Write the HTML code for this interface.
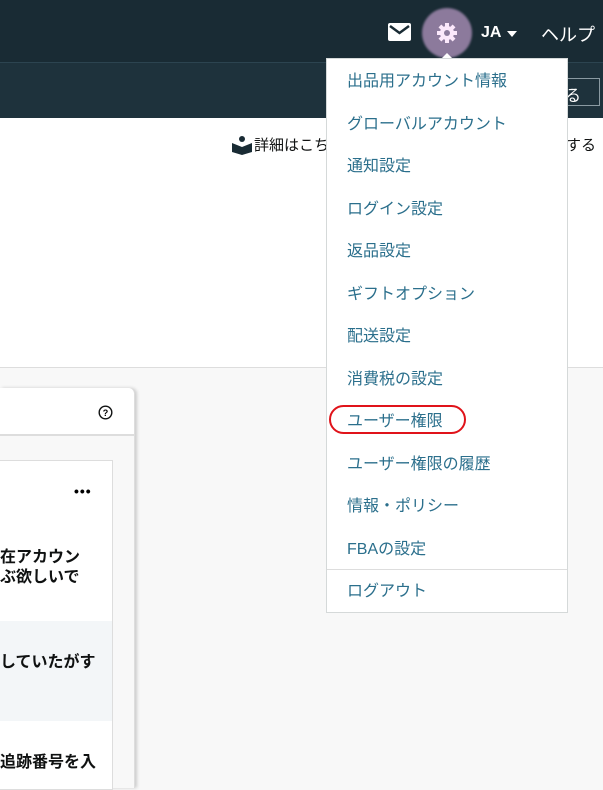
<!DOCTYPE html>
<html><head><meta charset="utf-8"><style>
*{margin:0;padding:0;box-sizing:border-box}
body{width:603px;height:778px;overflow:hidden;position:relative;background:#f8f8f8;font-family:"Liberation Sans","Noto Sans CJK JP",sans-serif}
.top{position:absolute;left:0;top:0;width:603px;height:62px;background:#192b34}
.bar2{position:absolute;left:0;top:62px;width:603px;height:56px;background:#1e323c;border-top:1px solid #2c4450}
.white{position:absolute;left:0;top:118px;width:603px;height:250px;background:#fff;border-bottom:1px solid #ddd}
.btn{position:absolute;left:540px;top:78px;width:60px;height:28px;border:1px solid #8a9aa2;color:#fff;font-size:16px;padding:3px 0 0 24px}
.menu{position:absolute;left:326px;top:58px;width:242px;height:555px;background:#fff;border:1px solid #d5d9d9}
.menu div{position:absolute;left:20px;font-size:16px;color:#2b6f8c;white-space:nowrap}
.card{position:absolute;left:0;top:388px;width:135px;height:400px;background:#f8f8f8;border-right:1px solid #ddd;box-shadow:2px 0 3px #ccc;border-top-right-radius:6px}
.ch{position:absolute;left:0;top:0;width:134px;height:48px;background:#fff;border-bottom:2px solid #ddd;border-top-right-radius:6px}
.inner{position:absolute;left:0;top:72px;width:113px;height:330px;background:#fff;border:1px solid #ddd;border-left:none}
.t{position:absolute;font-size:16px;font-weight:bold;color:#0f1111;white-space:nowrap}
</style></head><body>
<div class="top"></div>
<div class="bar2"></div>
<div class="btn">る</div>
<svg style="position:absolute;left:388px;top:23px" width="23" height="18" viewBox="0 0 23 18"><rect width="23" height="18" rx="2" fill="#fff"/><path d="M2 3 L11.5 10 L21 3" stroke="#192b34" stroke-width="2.5" fill="none"/></svg>
<div style="position:absolute;left:422px;top:8px;width:50px;height:50px;border-radius:50%;background:#8c7a9c;filter:blur(1px)"></div>
<svg style="position:absolute;left:437px;top:23px" width="20" height="20" viewBox="0 0 20 20"><g fill="#fbe8fb"><circle cx="10" cy="10" r="7"/><g id="tth"><rect x="8" y="0" width="4" height="5"/><rect x="8" y="15" width="4" height="5"/></g><use href="#tth" transform="rotate(45 10 10)"/><use href="#tth" transform="rotate(90 10 10)"/><use href="#tth" transform="rotate(135 10 10)"/></g><circle cx="10" cy="10" r="3" fill="#8c7a9c"/></svg>
<div style="position:absolute;left:481px;top:24px;color:#fff;font-weight:bold;font-size:16px">JA</div>
<div style="position:absolute;left:507px;top:31px;border:5px solid transparent;border-top:6px solid #fff"></div>
<div style="position:absolute;left:541px;top:21px;color:#fff;font-size:18px">ヘルプ</div>
<div class="white"></div>
<svg style="position:absolute;left:232px;top:135px" width="20" height="20" viewBox="0 0 20 20"><circle cx="10" cy="4" r="3" fill="#192b34"/><path d="M0 8 L10 12 L20 8 L20 17 L10 20 L0 17Z" fill="#192b34"/></svg>
<div style="position:absolute;left:254px;top:134px;font-size:15px;color:#0f1111">詳細はこち</div>
<div style="position:absolute;left:566px;top:134px;font-size:15px;color:#0f1111">する</div>
<div class="card"><div class="ch"></div>
<svg style="position:absolute;left:98px;top:17px" width="15" height="15" viewBox="0 0 15 15"><circle cx="7.5" cy="7.5" r="6.3" stroke="#0f1111" stroke-width="1.4" fill="none"/><text x="7.5" y="11" font-size="9" font-weight="bold" text-anchor="middle" font-family="Liberation Sans">?</text></svg>
<div class="inner"><div style="position:absolute;left:0;top:160px;width:112px;height:100px;background:#f3f6f8"></div></div>
<div style="position:absolute;left:74px;top:95px;font-size:14px;font-weight:bold;letter-spacing:1px">•••</div>
<div class="t" style="left:0;top:160px;line-height:20px">在アカウン<br>ぶ欲しいで</div>
<div class="t" style="left:0;top:260px">していたがす</div>
<div class="t" style="left:0;top:360px">追跡番号を入</div>
</div>
<div style="position:absolute;left:441px;top:53px;border:6px solid transparent;border-bottom:6px solid #fff;border-top:none"></div>
<div class="menu">
<div style="top:8px">出品用アカウント情報</div>
<div style="top:51px">グローバルアカウント</div>
<div style="top:93px">通知設定</div>
<div style="top:136px">ログイン設定</div>
<div style="top:178px">返品設定</div>
<div style="top:221px">ギフトオプション</div>
<div style="top:263px">配送設定</div>
<div style="top:306px">消費税の設定</div>
<div style="top:348px">ユーザー権限</div>
<div style="top:391px">ユーザー権限の履歴</div>
<div style="top:433px">情報・ポリシー</div>
<div style="top:476px">FBAの設定</div>
<div style="left:0;top:510px;width:240px;height:1px;background:#ddd"></div>
<div style="top:518px">ログアウト</div>
</div>
<div style="position:absolute;left:329px;top:405px;width:137px;height:29px;border:2px solid #e0131a;border-radius:15px"></div>
</body></html>
